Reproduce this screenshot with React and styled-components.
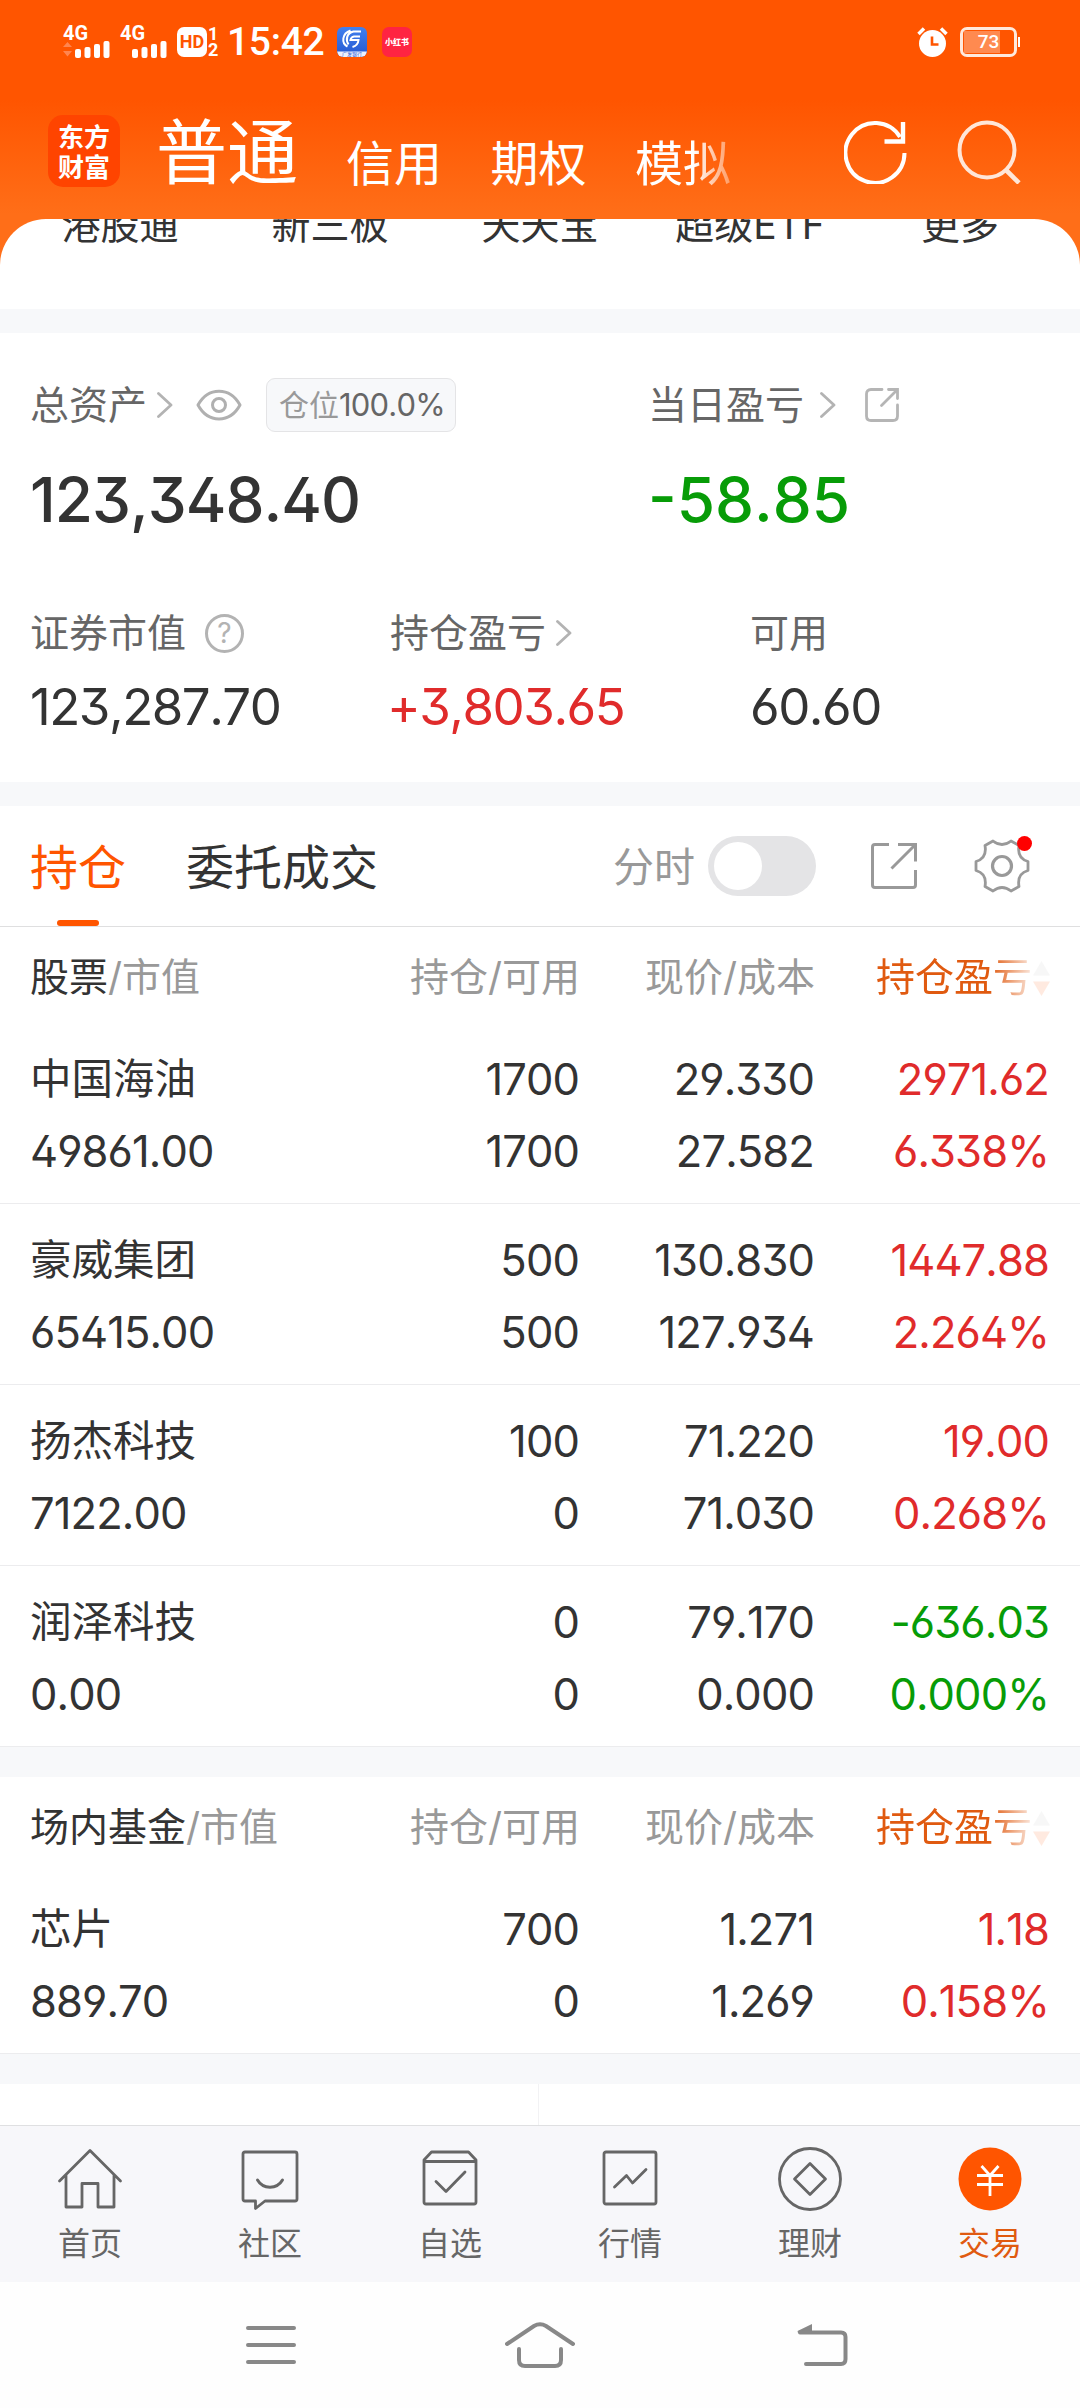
import React from "react";

import styled, { createGlobalStyle } from "styled-components";

const RED = "#e02b2b";
const GREEN = "#079c07";
const ORANGE = "#ff5500";

const quickLinks = ["港股通", "新三板", "天天宝", "超级ETF", "更多"];

const sections = [
  {
    title: "股票",
    rows: [
      ["中国海油", "49861.00", "1700", "1700", "29.330", "27.582", "2971.62", "6.338%"],
      ["豪威集团", "65415.00", "500", "500", "130.830", "127.934", "1447.88", "2.264%"],
      ["扬杰科技", "7122.00", "100", "0", "71.220", "71.030", "19.00", "0.268%"],
      ["润泽科技", "0.00", "0", "0", "79.170", "0.000", "-636.03", "0.000%"],
    ],
  },
  {
    title: "场内基金",
    rows: [["芯片", "889.70", "700", "0", "1.271", "1.269", "1.18", "0.158%"]],
  },
];

const Signal = ({ arrows }) => (
  <SignalDiv>
    <span>4G</span>
    <svg width="48" height="17" viewBox="0 0 48 17">
      {arrows && <path d="M0 6l4.5-5L9 6zM0 10h9l-4.500 5.500z" fill="#ff8550" />}
      <g fill="#fff">
        <rect x="12" y="8" width="6" height="9" rx="2" />
        <rect x="21.500" y="6" width="6" height="11" rx="2" />
        <rect x="31" y="3" width="6" height="14" rx="2" />
        <rect x="40.500" y="0" width="6" height="17" rx="2" />
      </g>
    </svg>
  </SignalDiv>
);

const Chevron = () => (
  <svg width="16" height="26" viewBox="0 0 16 26" fill="none" stroke="#b3b3b3" strokeWidth="2.800">
    <path d="M1.500 1.500L14 13L1.500 24.500" strokeLinecap="round" strokeLinejoin="round" />
  </svg>
);

const Eye = () => (
  <svg width="46" height="32" viewBox="0 0 46 32" fill="none" stroke="#b0b0b0" strokeWidth="3">
    <path d="M2 16C12 -2.500 34 -2.500 44 16C34 34.500 12 34.500 2 16Z" strokeLinejoin="round" />
    <circle cx="23" cy="16" r="6.500" />
  </svg>
);

const ShareSmall = () => (
  <svg width="34" height="34" viewBox="0 0 34 34" fill="none" stroke="#b5b5b5" strokeWidth="2.800">
    <path d="M17 1.500H6Q1.500 1.500 1.500 6V28Q1.500 32.500 6 32.500H28Q32.500 32.500 32.500 28V17" strokeLinecap="round" />
    <path d="M23.500 1.500H32.500V10.500M32 2L16.500 17.500" strokeLinecap="round" />
  </svg>
);

const ShareLarge = () => (
  <svg width="46" height="46" viewBox="0 0 46 46" fill="none" stroke="#999" strokeWidth="3">
    <path d="M18 1.500H4Q1.500 1.500 1.500 4V42Q1.500 44.500 4 44.500H42Q44.500 44.500 44.500 42V27" />
    <path d="M27 1.500H44.500V18.500M43.500 2.500L20.500 25.500" />
  </svg>
);

const Gear = () => (
  <svg width="56" height="56" viewBox="-28 -28 56 56" fill="none" stroke="#999" strokeWidth="2.800">
    <path
      d="M-9 -25Q0 -18 9 -25L17 -20.500C15.500 -12 19 -6.500 26 -4.500V4.500C19 6.500 15.500 12 17 20.500L9 25Q0 18 -9 25L-17 20.500C-15.500 12 -19 6.500 -26 4.500V-4.500C-19 -6.500 -15.500 -12 -17 -20.500Z"
      strokeLinejoin="round"
    />
    <circle r="9.500" strokeWidth="3.200" />
  </svg>
);

const tabs = [
  {
    label: "首页",
    icon: (
      <path d="M2.500 35L33 4.500L63.500 35M9 29.500V61H25V37.500H41V61H57V29.500" />
    ),
  },
  {
    label: "社区",
    icon: (
      <>
        <path d="M8 6H58Q60 6 60 8V53Q60 55 58 55H28L18.500 62.500V55H8Q6 55 6 53V8Q6 6 8 6Z" />
        <path d="M20.500 34C26 43.500 40 43.500 45.500 34" strokeWidth="3" />
      </>
    ),
  },
  {
    label: "自选",
    icon: (
      <>
        <path d="M7 14L14.500 6H51.500L59 14V56Q59 58 57 58H9Q7 58 7 56ZM7 15.500H59" />
        <path d="M19 35.500L29 45.500L48 26" />
      </>
    ),
  },
  {
    label: "行情",
    icon: (
      <>
        <rect x="7" y="6" width="52" height="52" rx="2" />
        <path d="M17.500 41L29.500 29.500L35.500 37L49 23.500" />
      </>
    ),
  },
  {
    label: "理财",
    icon: (
      <>
        <circle cx="33" cy="33" r="30.500" />
        <path d="M33 17.500L48.500 33L33 48.500L17.500 33Z" />
      </>
    ),
  },
  {
    label: "交易",
    active: true,
    icon: (
      <>
        <circle cx="33" cy="33" r="31.500" fill={ORANGE} stroke="none" />
        <path d="M24.500 20L33 29.500L41.500 20M33 29.500V50M20 29.500H46M20 38.500H46" stroke="#fff" strokeWidth="2.800" strokeLinecap="butt" />
      </>
    ),
  },
];

const Holdings = ({ title, rows }) => (
  <section>
    <HeadRow>
      <p>
        <b>{title}</b>/市值
      </p>
      <p>持仓/可用</p>
      <p>现价/成本</p>
      <SortHead>
        持仓盈亏
        <svg width="17" height="35" viewBox="0 0 17 35">
          <path d="M0 14.500L8.500 0L17 14.500Z" fill="#bbb" />
          <path d="M0 20.500H17L8.500 35Z" fill={ORANGE} />
        </svg>
      </SortHead>
    </HeadRow>
    {rows.map((row) => (
      <StockRow key={row[0]} $color={row[6].startsWith("-") ? GREEN : RED}>
        {[0, 2, 4, 6].map((i) => (
          <div key={i}>
            <p>{row[i]}</p>
            <p>{row[i + 1]}</p>
          </div>
        ))}
      </StockRow>
    ))}
  </section>
);

const App = () => {
  return (
    <Page>
      <GlobalStyle />
      <Header>
        <StatusBar>
          <Signal arrows />
          <Signal />
          <HdBadge>HD</HdBadge>
          <SimNumbers>
            <span>1</span>
            <span>2</span>
          </SimNumbers>
          <Clock>15:42</Clock>
          <BankIcon>
            <svg width="30" height="30" viewBox="0 0 30 30" fill="none" stroke="#fff" strokeWidth="2">
              <path d="M13.500 3.500C5 6.500 4 16 10.500 19.500M24 4.500H16.500C9.500 6 8.500 13 11.500 17.500M23 9.500H17Q14 10 13.500 13H21.500Q21 18.500 15.500 20" />
              <path d="M0 24.500H30V24Q30 30 24 30H6Q0 30 0 24Z" fill="#edf1ff" stroke="none" />
            </svg>
            <span>广发银行</span>
          </BankIcon>
          <RedIcon>小红书</RedIcon>
          <StatusRight>
            <svg width="31" height="30" viewBox="0 0 31 30">
              <circle cx="15.500" cy="16.500" r="13.500" fill="#fff" />
              <path d="M1.500 7L7 1.500M29.500 7L24 1.500" stroke="#fff" strokeWidth="3.500" />
              <path d="M15 9.500V17.500H21.500" stroke={ORANGE} strokeWidth="2.600" fill="none" />
            </svg>
            <Battery>73</Battery>
          </StatusRight>
        </StatusBar>
        <NavBar>
          <Logo>
            <span>东方</span>
            <span>财富</span>
          </Logo>
          <h1>普通</h1>
          <p>信用</p>
          <p>期权</p>
          <p className="fade">模拟</p>
          <NavIcons>
            <svg width="64" height="64" viewBox="0 0 64 64" fill="none" stroke="#fff" strokeWidth="4">
              <path d="M60.500 33A29.500 30 0 1 1 56 17" />
              <path d="M59 2V21.500H40.500" strokeWidth="4.400" />
            </svg>
            <svg width="64" height="64" viewBox="0 0 64 64" fill="none" stroke="#ffe6d8" strokeWidth="4">
              <circle cx="30" cy="30" r="27.500" />
              <path d="M48.500 49.500L62 63" strokeWidth="4.600" />
            </svg>
          </NavIcons>
        </NavBar>
      </Header>

      <QuickLinks>
        {quickLinks.map((item) => (
          <p key={item}>{item}</p>
        ))}
      </QuickLinks>
      <Band $height={24} />

      <Assets>
        <TopLine>
          <Label>总资产</Label>
          <Chevron />
          <Eye />
          <Ratio>
            仓位<b>100.0%</b>
          </Ratio>
        </TopLine>
        <TopLine $wide>
          <Label>当日盈亏</Label>
          <Chevron />
          <ShareSmall />
        </TopLine>
        <Total>123,348.40</Total>
        <Total $color={GREEN} $spacing="0">
          -58.85
        </Total>
      </Assets>
      <Figures>
        <div>
          <FigureLabel $gap={19}>
            证券市值
            <Question>?</Question>
          </FigureLabel>
          <Figure>123,287.70</Figure>
        </div>
        <div>
          <FigureLabel $gap={10}>
            持仓盈亏
            <Chevron />
          </FigureLabel>
          <Figure $color={RED}>+3,803.65</Figure>
        </div>
        <div>
          <FigureLabel>可用</FigureLabel>
          <Figure>60.60</Figure>
        </div>
      </Figures>
      <Band $height={24} />

      <Tabs>
        <Tab $active>持仓</Tab>
        <Tab>委托成交</Tab>
        <TabTools>
          <span>分时</span>
          <Toggle />
          <ShareLarge />
          <GearWrap>
            <Gear />
          </GearWrap>
        </TabTools>
      </Tabs>
      <Holdings {...sections[0]} />
      <Band $height={30} />
      <Holdings {...sections[1]} />
      <Band $height={30} />
      <Peek>
        <div />
        <div />
      </Peek>

      <BottomTabs>
        {tabs.map((item) => (
          <BottomTab key={item.label} $active={item.active}>
            <svg
              width="66"
              height="66"
              viewBox="0 0 66 66"
              fill="none"
              stroke="#666"
              strokeWidth="2.800"
              strokeLinejoin="round"
              strokeLinecap="round"
            >
              {item.icon}
            </svg>
            <p>{item.label}</p>
          </BottomTab>
        ))}
      </BottomTabs>
      <SystemNav>
        <svg width="50" height="42" viewBox="0 0 50 42">
          <path d="M2 4H48M2 21H48M2 38H48" />
        </svg>
        <svg width="70" height="46" viewBox="0 0 70 46">
          <path d="M2 22L29 4Q35 0.500 41 4L68 22M14 27V38Q14 44 20 44H50Q56 44 56 38V27" />
        </svg>
        <svg width="52" height="44" viewBox="0 0 52 44">
          <path d="M4 9.500H45Q49.500 9.500 49.500 14V36Q49.500 41 45 41H10" />
          <path d="M2 9L15 2.500V9Z" fill="#888" strokeWidth="2" />
        </svg>
      </SystemNav>
    </Page>
  );
};

export default App;

const GlobalStyle = createGlobalStyle`
  * {
    box-sizing: border-box;
  }
  body {
    margin: 0;
    background: #fff;
  }
  p, h1 {
    margin: 0;
    font-weight: 400;
  }
  b {
    font-weight: 400;
  }
  svg {
    display: block;
    flex: none;
  }
`;

const Page = styled.div`
  width: 1080px;
  height: 2408px;
  overflow: hidden;
  background: #fff;
  color: #333;
  font-family: Inter, "Noto Sans CJK SC", sans-serif;
  font-feature-settings: "ss01";
  font-kerning: none;
  line-height: 1.2;
  white-space: nowrap;
`;

const Header = styled.header`
  height: 265px;
  background: linear-gradient(#ff5500 100px, #ff6e18 214px, #ff6e18);
  color: #fff;
`;

const StatusBar = styled.div`
  display: flex;
  align-items: center;
  height: 84px;
  padding-left: 63px;
`;

const SignalDiv = styled.div`
  width: 57px;
  height: 32px;
  span {
    display: block;
    font: 700 20px/15px Roboto, sans-serif;
  }
`;

const HdBadge = styled.div`
  width: 30px;
  height: 30px;
  border-radius: 7px;
  background: #fff;
  color: ${ORANGE};
  font: 700 18px/30px Roboto, sans-serif;
  text-align: center;
`;

const SimNumbers = styled.div`
  width: 20px;
  padding-left: 1px;
  font: 700 18px/16px Roboto, sans-serif;
  span {
    display: block;
  }
`;

const Clock = styled.p`
  width: 110px;
  font: 500 39px/40px Roboto, sans-serif;
  letter-spacing: -0.300px;
`;

const BankIcon = styled.div`
  position: relative;
  width: 30px;
  height: 30px;
  border-radius: 6px;
  background: linear-gradient(#4280ee, #2457d0);
  overflow: hidden;
  span {
    position: absolute;
    left: 5px;
    bottom: 0;
    color: #2457d0;
    font-size: 5px;
    line-height: 6px;
  }
`;

const RedIcon = styled.div`
  width: 30px;
  height: 30px;
  margin-left: 15px;
  border-radius: 7px;
  background: #ff2442;
  font-size: 8px;
  font-weight: 900;
  line-height: 30px;
  text-align: center;
`;

const StatusRight = styled.div`
  display: flex;
  gap: 12px;
  margin-left: auto;
  padding-right: 63px;
`;

const Battery = styled.div`
  position: relative;
  width: 57px;
  height: 30px;
  border: 3px solid #ffe9dc;
  border-radius: 7px;
  background: linear-gradient(90deg, #ff8a50 36px, transparent 36px) 1px 1px / 50px 22px no-repeat;
  font: 500 19px/24px Roboto, sans-serif;
  text-align: center;
  &::after {
    content: "";
    position: absolute;
    right: -6px;
    top: 7px;
    width: 2px;
    height: 10px;
    background: #fff;
  }
`;

const NavBar = styled.div`
  display: flex;
  height: 135px;
  padding-left: 48px;
  h1 {
    width: 190px;
    margin-left: 36px;
    font-size: 71px;
    line-height: 137px;
  }
  p {
    width: 144.500px;
    font-size: 48px;
    line-height: 160px;
  }
  .fade {
    width: 96px;
    -webkit-mask-image: linear-gradient(90deg, #000 58px, rgba(0, 0, 0, 0.35));
    mask-image: linear-gradient(90deg, #000 58px, rgba(0, 0, 0, 0.35));
  }
`;

const Logo = styled.div`
  display: flex;
  flex-direction: column;
  gap: 4px;
  width: 72px;
  height: 72px;
  margin-top: 31px;
  padding-top: 8px;
  border-radius: 15px;
  background: #ff4400;
  font-family: "Noto Sans CJK SC", sans-serif;
  font-size: 26px;
  font-weight: 700;
  line-height: 26px;
  text-align: center;
`;

const NavIcons = styled.div`
  display: flex;
  gap: 49px;
  margin: 36px 59px 0 auto;
`;

/* pulled up over the header so its rounded corners show the orange behind */
const QuickLinks = styled.div`
  position: relative;
  display: grid;
  grid-template-columns: repeat(5, 210px);
  height: 90px;
  margin-top: -46px;
  padding: 0 15px;
  border-radius: 46px 46px 0 0;
  background: #fff;
  overflow: hidden;
  p {
    height: 40px;
    margin-top: -14px;
    font-size: 39px;
    line-height: 40px;
    text-align: center;
  }
`;

const Band = styled.div`
  height: ${(props) => props.$height}px;
  background: #f7f8fa;
`;

const Assets = styled.div`
  display: grid;
  grid-template-columns: 618px 1fr;
  grid-template-rows: 54px 136px;
  height: 236px;
  padding: 45px 0 0 30px;
`;

const TopLine = styled.div`
  display: flex;
  align-items: center;
  svg:nth-of-type(1) {
    margin-left: ${(props) => (props.$wide ? 16 : 10)}px;
  }
  svg:nth-of-type(2) {
    margin-left: ${(props) => (props.$wide ? 29 : 23)}px;
  }
`;

const Label = styled.p`
  color: #666;
  font-size: 39px;
  line-height: 54px;
`;

const Ratio = styled.div`
  display: flex;
  align-items: center;
  width: 190px;
  height: 54px;
  margin-left: 24px;
  padding-left: 12px;
  border: 1px solid #e4e4e6;
  border-radius: 9px;
  background: #f7f8fa;
  color: #999;
  font-size: 30px;
  b {
    color: #666;
    font-size: 31px;
    letter-spacing: -0.800px;
  }
`;

const Total = styled.p`
  color: ${(props) => props.$color || "#333"};
  font-size: 62px;
  font-weight: 500;
  line-height: 136px;
  letter-spacing: ${(props) => props.$spacing || "-1px"};
`;

const Figures = styled.div`
  display: grid;
  grid-template-columns: 360px 360px 1fr;
  height: 213px;
  padding: 37px 0 0 30px;
`;

const FigureLabel = styled.div`
  display: flex;
  align-items: center;
  gap: ${(props) => props.$gap || 0}px;
  height: 54px;
  color: #666;
  font-size: 39px;
`;

const Question = styled.span`
  width: 39px;
  height: 39px;
  border: 3px solid #b3b3b3;
  border-radius: 50%;
  color: #b3b3b3;
  font-size: 28px;
  line-height: 33px;
  text-align: center;
`;

const Figure = styled.p`
  margin-left: ${(props) => (props.$color ? -3 : 0)}px;
  color: ${(props) => props.$color || "#333"};
  font-size: 51px;
  line-height: 94px;
  letter-spacing: -1.500px;
`;

const Tabs = styled.div`
  display: flex;
  height: 121px;
  padding: 0 50px 0 30px;
  border-bottom: 1px solid #dfdfe0;
`;

const Tab = styled.div`
  display: flex;
  flex-direction: column;
  align-items: center;
  margin-right: 60px;
  color: ${(props) => (props.$active ? ORANGE : "#333")};
  font-size: 48px;
  line-height: 123px;
  height: 120px;
  &::after {
    content: "";
    width: 42px;
    height: 6px;
    margin-top: -9px;
    border-radius: 3px;
    background: ${(props) => (props.$active ? ORANGE : "transparent")};
  }
`;

const TabTools = styled.div`
  display: flex;
  align-items: center;
  margin-left: auto;
  color: #999;
  font-size: 41px;
  span {
    padding-top: 3px;
  }
  svg {
    margin-left: 55px;
  }
`;

const Toggle = styled.div`
  width: 108px;
  height: 60px;
  margin-left: 13px;
  padding: 6px;
  border-radius: 30px;
  background: #e4e4e6;
  &::before {
    content: "";
    display: block;
    width: 48px;
    height: 48px;
    border-radius: 50%;
    background: #fff;
  }
`;

const GearWrap = styled.div`
  position: relative;
  margin-left: 2px;
  &::after {
    content: "";
    position: absolute;
    right: -2px;
    top: -2px;
    width: 15px;
    height: 15px;
    border-radius: 50%;
    background: #f00;
  }
`;

const HeadRow = styled.div`
  display: grid;
  grid-template-columns: 340px 210px 235px 1fr;
  height: 96px;
  padding: 0 30px;
  color: #999;
  font-size: 39px;
  line-height: 99px;
  text-align: right;
  p:first-child {
    text-align: left;
  }
  b {
    color: #333;
  }
`;

const SortHead = styled.div`
  display: flex;
  align-items: center;
  justify-content: flex-end;
  color: #e05a10;
  -webkit-mask-image: linear-gradient(90deg, #000 175px, rgba(0, 0, 0, 0.12) 218px);
  mask-image: linear-gradient(90deg, #000 175px, rgba(0, 0, 0, 0.12) 218px);
  svg {
    margin: 3px 0 0 1px;
  }
`;

const StockRow = styled.div`
  display: grid;
  grid-template-columns: 340px 210px 235px 1fr;
  height: 181px;
  padding: 20px 30px 0;
  border-bottom: 1px solid #ececee;
  font-size: 43.500px;
  line-height: 72px;
  letter-spacing: -0.900px;
  text-align: right;
  div {
    padding-right: 1px;
  }
  div:first-child {
    text-align: left;
    p:first-child {
      font-size: 41.500px;
      letter-spacing: 0;
    }
  }
  div:last-child {
    color: ${(props) => props.$color};
  }
`;

const Peek = styled.div`
  display: grid;
  grid-template-columns: 539px 1fr;
  height: 41px;
  div:first-child {
    border-right: 1px solid #f2f2f4;
  }
`;

const BottomTabs = styled.nav`
  display: grid;
  grid-template-columns: repeat(6, 180px);
  height: 157px;
  padding-top: 20px;
  border-top: 1px solid #dfe0e2;
  background: #f7f7fa;
`;

const BottomTab = styled.div`
  display: flex;
  flex-direction: column;
  align-items: center;
  color: ${(props) => (props.$active ? "#e05a10" : "#666")};
  font-size: 32px;
  line-height: 64px;
`;

const SystemNav = styled.div`
  display: grid;
  grid-template-columns: 259px 291px 1fr;
  align-items: center;
  height: 126px;
  padding-left: 246px;
  background: #fefefe;
  svg {
    fill: none;
    stroke: #888;
    stroke-width: 4;
    stroke-linecap: round;
  }
`;
